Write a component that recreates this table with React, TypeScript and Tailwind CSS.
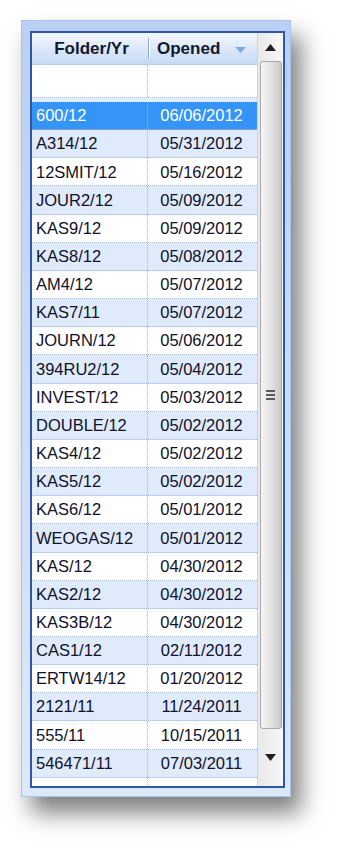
import React from "react";

const rows: [string, string][] = [
  ["600/12", "06/06/2012"],
  ["A314/12", "05/31/2012"],
  ["12SMIT/12", "05/16/2012"],
  ["JOUR2/12", "05/09/2012"],
  ["KAS9/12", "05/09/2012"],
  ["KAS8/12", "05/08/2012"],
  ["AM4/12", "05/07/2012"],
  ["KAS7/11", "05/07/2012"],
  ["JOURN/12", "05/06/2012"],
  ["394RU2/12", "05/04/2012"],
  ["INVEST/12", "05/03/2012"],
  ["DOUBLE/12", "05/02/2012"],
  ["KAS4/12", "05/02/2012"],
  ["KAS5/12", "05/02/2012"],
  ["KAS6/12", "05/01/2012"],
  ["WEOGAS/12", "05/01/2012"],
  ["KAS/12", "04/30/2012"],
  ["KAS2/12", "04/30/2012"],
  ["KAS3B/12", "04/30/2012"],
  ["CAS1/12", "02/11/2012"],
  ["ERTW14/12", "01/20/2012"],
  ["2121/11", "11/24/2011"],
  ["555/11", "10/15/2011"],
  ["546471/11", "07/03/2011"],
  ["", ""],
];

export default function App() {
  return (
    <div
      className="w-[347px] h-[853px] bg-white pt-[20px] pl-[21px]"
      style={{ fontFamily: '"Liberation Sans", Arial, sans-serif' }}
    >
      <div className="w-[270px] h-[777px] pt-[10px] pl-[8px] pr-[7px] pb-[10px] bg-gradient-to-b from-[#b9d0f3] to-[#dce8fb] border border-[#a9c3ec] shadow-[10px_16px_22px_rgba(0,0,0,0.5)]">
        <div className="w-[255px] h-[757px] border-2 border-[#2f56ab] flex overflow-hidden bg-[#dce8fb]">
          {/* table */}
          <div className="w-[225px] flex flex-col overflow-hidden">
            {/* header */}
            <div className="h-[32px] shrink-0 flex bg-gradient-to-b from-[#f3f7fd] to-[#c6d9f4] border-b border-[#b7cdee]">
              <div className="w-[116px] flex items-center justify-center pl-[3px] text-[17px] font-bold text-[#121a30]">
                Folder/Yr
              </div>
              <div className="w-[2px] my-[5px] bg-[#8ea9d4] border-r border-white"></div>
              <div className="flex-1 flex items-center pl-[7px] text-[17px] font-bold text-[#121a30]">
                <span>Opened</span>
                <svg width="11" height="6" viewBox="0 0 11 6" className="ml-[15px] mt-[2px]">
                  <path d="M0 0 L11 0 L5.5 6 Z" fill="#86a6da" />
                </svg>
              </div>
            </div>
            {/* filter row */}
            <div className="h-[33px] shrink-0 flex bg-white border-b border-dotted border-[#9db5df]">
              <div className="w-[116px] border-r border-dotted border-[#9db5df]"></div>
              <div className="flex-1"></div>
            </div>
            <div className="h-[4px] shrink-0 bg-[#e4edfb]"></div>
            {/* rows */}
            {rows.map(([a, b], i) => {
              const sel = i === 0;
              const bg = sel ? "bg-[#3594f7]" : i % 2 === 1 ? "bg-[#dfeafb]" : "bg-white";
              const txt = sel ? "text-white" : "text-[#10112a]";
              return (
                <div
                  key={i}
                  className={`h-[28.17px] shrink-0 flex ${bg} ${txt} text-[16.5px] border-b border-dotted border-[#9db5df]`}
                >
                  <div className="w-[116px] flex items-center pl-[4px] border-r border-dotted border-[#9db5df]">
                    {a}
                  </div>
                  <div className="flex-1 flex items-center justify-center pr-[2px]">{b}</div>
                </div>
              );
            })}
          </div>
          {/* scrollbar */}
          <div className="w-[26px] shrink-0 flex flex-col items-center bg-gradient-to-r from-[#e9e9e9] to-[#f7f7f7] border-l border-[#c9d3e3]">
            <div className="h-[28px] shrink-0 flex items-center justify-center">
              <svg width="11" height="7" viewBox="0 0 11 7">
                <path d="M5.5 0 L11 7 L0 7 Z" fill="#202020" />
              </svg>
            </div>
            <div className="w-[22px] h-[668px] shrink-0 rounded-[3px] border border-[#a8a8a8] bg-gradient-to-r from-[#f6f6f6] via-[#e2e2e2] to-[#c9c9c9] flex items-center justify-center">
              <div className="flex flex-col gap-[2px]">
                <div className="w-[9px] h-[2px] bg-[#5a5a5a]"></div>
                <div className="w-[9px] h-[2px] bg-[#5a5a5a]"></div>
                <div className="w-[9px] h-[2px] bg-[#5a5a5a]"></div>
              </div>
            </div>
            <div className="flex-1 flex items-center justify-center">
              <svg width="11" height="7" viewBox="0 0 11 7">
                <path d="M0 0 L11 0 L5.5 7 Z" fill="#202020" />
              </svg>
            </div>
          </div>
        </div>
      </div>
    </div>
  );
}
